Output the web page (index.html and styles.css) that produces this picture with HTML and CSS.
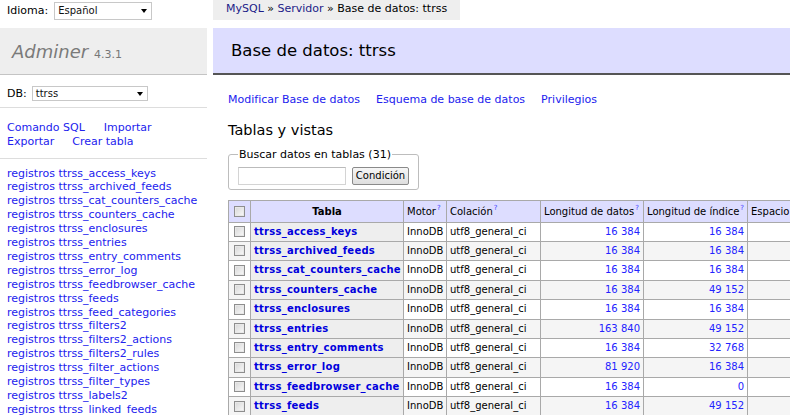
FILE: index.html
```html
<!DOCTYPE html>
<html lang="es">
<head>
<meta charset="utf-8">
<title>Base de datos: ttrss - Adminer</title>
<link rel="stylesheet" href="styles.css">
</head>
<body>
<div class="page">
  <aside class="menu">
    <div class="lang">Idioma: <span class="select sel-lang">Español<i class="arrow"></i></span></div>
    <h1 class="logo"><a href="#" class="brand">Adminer</a> <span class="version">4.3.1</span></h1>
    <div class="dbsel">DB: <span class="select sel-db">ttrss<i class="arrow"></i></span></div>
    <div class="links">
      <div><a href="#" class="l1">Comando SQL</a><a href="#">Importar</a></div>
      <div><a href="#" class="l2">Exportar</a><a href="#">Crear tabla</a></div>
    </div>
    <ul class="tables">
      <li><a href="#">registros</a> <a href="#">ttrss_access_keys</a></li>
      <li><a href="#">registros</a> <a href="#">ttrss_archived_feeds</a></li>
      <li><a href="#">registros</a> <a href="#">ttrss_cat_counters_cache</a></li>
      <li><a href="#">registros</a> <a href="#">ttrss_counters_cache</a></li>
      <li><a href="#">registros</a> <a href="#">ttrss_enclosures</a></li>
      <li><a href="#">registros</a> <a href="#">ttrss_entries</a></li>
      <li><a href="#">registros</a> <a href="#">ttrss_entry_comments</a></li>
      <li><a href="#">registros</a> <a href="#">ttrss_error_log</a></li>
      <li><a href="#">registros</a> <a href="#">ttrss_feedbrowser_cache</a></li>
      <li><a href="#">registros</a> <a href="#">ttrss_feeds</a></li>
      <li><a href="#">registros</a> <a href="#">ttrss_feed_categories</a></li>
      <li><a href="#">registros</a> <a href="#">ttrss_filters2</a></li>
      <li><a href="#">registros</a> <a href="#">ttrss_filters2_actions</a></li>
      <li><a href="#">registros</a> <a href="#">ttrss_filters2_rules</a></li>
      <li><a href="#">registros</a> <a href="#">ttrss_filter_actions</a></li>
      <li><a href="#">registros</a> <a href="#">ttrss_filter_types</a></li>
      <li><a href="#">registros</a> <a href="#">ttrss_labels2</a></li>
      <li><a href="#">registros</a> <a href="#">ttrss_linked_feeds</a></li>
      <li><a href="#">registros</a> <a href="#">ttrss_linked_instances</a></li>
    </ul>
  </aside>
  <main class="content">
    <div class="crumbbar"><p class="breadcrumb"><a href="#">MySQL</a> » <a href="#">Servidor</a> » Base de datos: ttrss</p></div>
    <h2 class="title">Base de datos: ttrss</h2>
    <p class="actions"><a href="#">Modificar Base de datos</a><a href="#">Esquema de base de datos</a><a href="#">Privilegios</a></p>
    <h3 class="subtitle">Tablas y vistas</h3>
    <fieldset class="search">
      <legend>Buscar datos en tablas (31)</legend>
      <div class="search-row"><span class="input"></span><span class="button">Condición</span></div>
    </fieldset>
    <table class="grid">
      <colgroup>
        <col class="c-cb"><col class="c-name"><col class="c-engine"><col class="c-coll"><col class="c-len"><col class="c-idx"><col class="c-free">
      </colgroup>
      <thead>
        <tr>
          <td class="cbcell"><span class="cb"></span></td>
          <th class="center">Tabla</th>
          <td>Motor<sup>?</sup></td>
          <td>Colación<sup>?</sup></td>
          <td>Longitud de datos<sup>?</sup></td>
          <td>Longitud de índice<sup>?</sup></td>
          <td>Espacio libre<sup>?</sup></td>
        </tr>
      </thead>
      <tbody>
        <tr><td class="cbcell"><span class="cb"></span></td><th><a href="#">ttrss_access_keys</a></th><td>InnoDB</td><td>utf8_general_ci</td><td class="num"><a href="#">16&nbsp;384</a></td><td class="num"><a href="#">16&nbsp;384</a></td><td class="num"><a href="#">0</a></td></tr>
        <tr class="odd"><td class="cbcell"><span class="cb"></span></td><th><a href="#">ttrss_archived_feeds</a></th><td>InnoDB</td><td>utf8_general_ci</td><td class="num"><a href="#">16&nbsp;384</a></td><td class="num"><a href="#">16&nbsp;384</a></td><td class="num"><a href="#">0</a></td></tr>
        <tr><td class="cbcell"><span class="cb"></span></td><th><a href="#">ttrss_cat_counters_cache</a></th><td>InnoDB</td><td>utf8_general_ci</td><td class="num"><a href="#">16&nbsp;384</a></td><td class="num"><a href="#">16&nbsp;384</a></td><td class="num"><a href="#">0</a></td></tr>
        <tr class="odd"><td class="cbcell"><span class="cb"></span></td><th><a href="#">ttrss_counters_cache</a></th><td>InnoDB</td><td>utf8_general_ci</td><td class="num"><a href="#">16&nbsp;384</a></td><td class="num"><a href="#">49&nbsp;152</a></td><td class="num"><a href="#">0</a></td></tr>
        <tr><td class="cbcell"><span class="cb"></span></td><th><a href="#">ttrss_enclosures</a></th><td>InnoDB</td><td>utf8_general_ci</td><td class="num"><a href="#">16&nbsp;384</a></td><td class="num"><a href="#">16&nbsp;384</a></td><td class="num"><a href="#">0</a></td></tr>
        <tr class="odd"><td class="cbcell"><span class="cb"></span></td><th><a href="#">ttrss_entries</a></th><td>InnoDB</td><td>utf8_general_ci</td><td class="num"><a href="#">163&nbsp;840</a></td><td class="num"><a href="#">49&nbsp;152</a></td><td class="num"><a href="#">0</a></td></tr>
        <tr><td class="cbcell"><span class="cb"></span></td><th><a href="#">ttrss_entry_comments</a></th><td>InnoDB</td><td>utf8_general_ci</td><td class="num"><a href="#">16&nbsp;384</a></td><td class="num"><a href="#">32&nbsp;768</a></td><td class="num"><a href="#">0</a></td></tr>
        <tr class="odd"><td class="cbcell"><span class="cb"></span></td><th><a href="#">ttrss_error_log</a></th><td>InnoDB</td><td>utf8_general_ci</td><td class="num"><a href="#">81&nbsp;920</a></td><td class="num"><a href="#">16&nbsp;384</a></td><td class="num"><a href="#">0</a></td></tr>
        <tr><td class="cbcell"><span class="cb"></span></td><th><a href="#">ttrss_feedbrowser_cache</a></th><td>InnoDB</td><td>utf8_general_ci</td><td class="num"><a href="#">16&nbsp;384</a></td><td class="num"><a href="#">0</a></td><td class="num"><a href="#">0</a></td></tr>
        <tr class="odd"><td class="cbcell"><span class="cb"></span></td><th><a href="#">ttrss_feeds</a></th><td>InnoDB</td><td>utf8_general_ci</td><td class="num"><a href="#">16&nbsp;384</a></td><td class="num"><a href="#">49&nbsp;152</a></td><td class="num"><a href="#">0</a></td></tr>
        <tr><td class="cbcell"><span class="cb"></span></td><th><a href="#">ttrss_feed_categories</a></th><td>InnoDB</td><td>utf8_general_ci</td><td class="num"><a href="#">16&nbsp;384</a></td><td class="num"><a href="#">16&nbsp;384</a></td><td class="num"><a href="#">0</a></td></tr>
        <tr class="odd"><td class="cbcell"><span class="cb"></span></td><th><a href="#">ttrss_filters2</a></th><td>InnoDB</td><td>utf8_general_ci</td><td class="num"><a href="#">16&nbsp;384</a></td><td class="num"><a href="#">32&nbsp;768</a></td><td class="num"><a href="#">0</a></td></tr>
      </tbody>
    </table>
  </main>
</div>
</body>
</html>
```
FILE: styles.css
```css
html, body {
  margin: 0;
  padding: 0;
  overflow: hidden;
  background: #fff;
}
body {
  font: 11px/13.75px "DejaVu Sans", Verdana, sans-serif;
  color: #000;
}
a {
  color: #2222ee;
  text-decoration: none;
}
.page {
  display: flex;
  align-items: flex-start;
  gap: 6px;
  width: 790px;
  height: 415px;
  overflow: hidden;
}

/* ---------- sidebar ---------- */
.menu {
  flex: 0 0 207px;
  width: 207px;
}
.lang {
  height: 28px;
  box-sizing: border-box;
  padding: 2px 0 0 7px;
  display: flex;
  align-items: flex-start;
  gap: 6px;
  line-height: 18px;
}
.select {
  position: relative;
  display: inline-block;
  box-sizing: border-box;
  background: #fff;
  border: 1px solid #c8c8c8;
  font-size: 10px;
  color: #111;
  padding-left: 3px;
}
.sel-lang {
  width: 98px;
  height: 18px;
  line-height: 16px;
}
.sel-db {
  width: 116px;
  height: 15px;
  line-height: 13px;
}
.arrow {
  position: absolute;
  right: 4px;
  top: 50%;
  margin-top: -2px;
  width: 0;
  height: 0;
  border-left: 3.5px solid transparent;
  border-right: 3.5px solid transparent;
  border-top: 4px solid #000;
}
.logo {
  margin: 0;
  height: 47px;
  box-sizing: border-box;
  padding: 12px 0 0 12px;
  background: #eee;
  border-bottom: 1px solid #c4c4c4;
  font-weight: normal;
  font-size: 18px;
  line-height: 23px;
  color: #777;
  white-space: nowrap;
}
.brand {
  color: #7a7a7a;
  font-style: italic;
}
.version {
  font-size: 11px;
  color: #777;
  margin-left: 0;
}
.dbsel {
  height: 33px;
  box-sizing: border-box;
  padding: 11px 0 0 7px;
  border-bottom: 1px solid #ddd;
  display: flex;
  align-items: flex-start;
  gap: 5px;
  line-height: 15px;
}
.links {
  padding: 13px 0 9px 7px;
  border-bottom: 1px solid #ddd;
}
.links .l1 {
  margin-right: 19px;
}
.links .l2 {
  margin-right: 18px;
}
.tables {
  list-style: none;
  margin: 0;
  padding: 8px 0 0 7px;
  white-space: nowrap;
  line-height: 13.9px;
}

/* ---------- content ---------- */
.content {
  flex: 1 1 auto;
  min-width: 0;
}
.crumbbar {
  height: 28px;
}
.breadcrumb {
  display: inline-block;
  margin: 0;
  height: 20px;
  line-height: 18px;
  padding: 0 13px;
  background: #eee;
  white-space: nowrap;
}
.breadcrumb a {
  color: #1c1c88;
}
.title {
  margin: 0;
  height: 47px;
  box-sizing: border-box;
  padding: 12px 0 0 18px;
  background: #ddf;
  border-bottom: 2px solid #555;
  font-size: 16.5px;
  line-height: 22px;
  font-weight: normal;
  color: #000;
}
.actions {
  margin: 18px 0 0 15px;
  white-space: nowrap;
}
.actions a {
  margin-right: 16px;
}
.subtitle {
  margin: 14px 0 0 15px;
  font-size: 14.5px;
  line-height: 18px;
  font-weight: normal;
}
.search {
  display: inline-block;
  margin: 9px 0 0 15px;
  padding: 0 9px 4px 9px;
  border: 1px solid #bdbdbd;
  border-radius: 3px;
  min-width: 0;
}
.search legend {
  padding: 0 1px;
  line-height: 13.75px;
}
.search-row {
  display: flex;
  gap: 6px;
  margin-top: 5px;
}
.input {
  display: block;
  width: 108px;
  height: 18px;
  box-sizing: border-box;
  border: 1px solid #d4d4d4;
  border-top-color: #bbb;
  background: #fff;
}
.button {
  display: block;
  width: 57px;
  height: 18px;
  box-sizing: border-box;
  border: 1px solid #8a8a8a;
  border-radius: 2px;
  background: linear-gradient(#f6f6f6, #dedede);
  font-size: 10px;
  line-height: 16px;
  text-align: center;
}

/* ---------- table ---------- */
.grid {
  margin: 10px 0 0 15px;
  border-collapse: collapse;
  table-layout: fixed;
  width: 640px;
  font-size: 10px;
}
.c-cb { width: 22px; }
.c-name { width: 153px; }
.c-engine { width: 43px; }
.c-coll { width: 94px; }
.c-len { width: 103px; }
.c-idx { width: 104px; }
.c-free { width: 121px; }
.grid td, .grid th {
  border: 1px solid #a9a9a9;
  padding: 2px 3px;
  line-height: 14.4px;
  white-space: nowrap;
  overflow: hidden;
  text-align: left;
}
.grid thead td, .grid thead th {
  background: #ddf;
  line-height: 17px;
  padding: 2px 3px;
}
.grid thead th {
  text-align: center;
}
.grid tbody th {
  background: #eee;
  font-weight: bold;
  letter-spacing: 0.25px;
}
.grid tbody th a {
  color: #0000dd;
}
.grid tbody tr.odd td {
  background: #f5f5f5;
}
.grid .num {
  text-align: right;
}
.grid .num a {
  color: #2323ff;
}
.grid sup {
  font-size: 7px;
  line-height: 0;
  vertical-align: 5px;
  color: #4040ff;
  margin-left: 1px;
}
.grid .cbcell {
  padding: 0;
  text-align: center;
}
.cb {
  display: inline-block;
  vertical-align: middle;
  width: 11px;
  height: 11px;
  box-sizing: border-box;
  border: 1px solid #8e8e8e;
  background: linear-gradient(135deg, #d6d6d6, #fafafa);
  box-shadow: inset 0 0 0 1px #e8e8e8;
}
```
